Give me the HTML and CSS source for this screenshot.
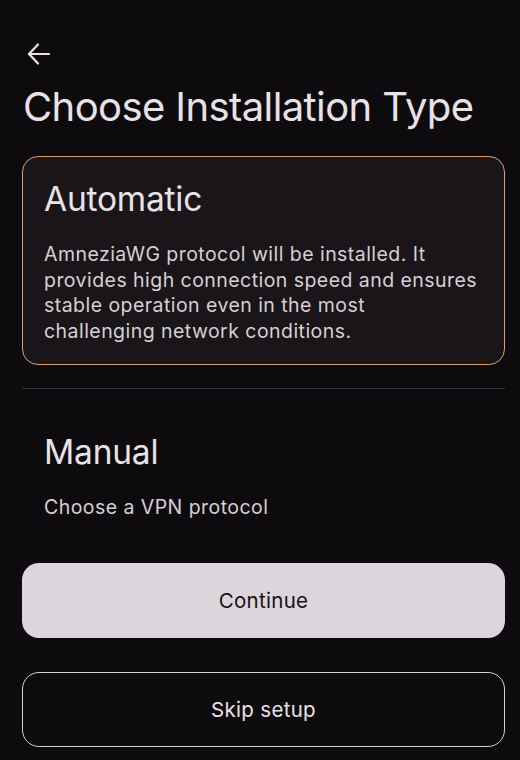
FILE: index.html
```html
<!DOCTYPE html>
<html>
<head>
<meta charset="utf-8">
<link rel="stylesheet" href="styles.css">
</head>
<body>
<div class="screen">
  <div class="topbar">
    <svg class="back" width="26" height="26" viewBox="0 0 26 26" fill="none" stroke="#e8e2e7" stroke-width="2.2" stroke-linecap="round" stroke-linejoin="round"><path d="M23 13H3"/><path d="M12 3.5L3 13l9 9.5"/></svg>
  </div>
  <h1 class="title">Choose Installation Type</h1>
  <div class="option selected">
    <div class="opt-title">Automatic</div>
    <div class="opt-desc">AmneziaWG protocol will be installed. It provides high connection speed and ensures stable operation even in the most challenging network conditions.</div>
  </div>
  <div class="divider"></div>
  <div class="option">
    <div class="opt-title">Manual</div>
    <div class="opt-desc">Choose a VPN protocol</div>
  </div>
  <div class="buttons">
    <button class="btn primary">Continue</button>
    <button class="btn outline">Skip setup</button>
  </div>
</div>
</body>
</html>
```
FILE: styles.css
```css
html, body {
  margin: 0;
  padding: 0;
  background: #0e0b0f;
}
body {
  font-family: Inter, "Noto Sans", sans-serif;
  color: #e6e0e5;
}
.screen {
  padding: 0 15px 0 22px;
  display: flex;
  flex-direction: column;
}
.topbar {
  height: 108px;
  display: flex;
  align-items: flex-start;
  padding-top: 41px;
  box-sizing: border-box;
}
.back {
  margin-left: 4px;
}
.title {
  margin: -27px 0 0 1px;
  font-weight: 400;
  font-size: 40px;
  letter-spacing: -0.6px;
  line-height: 52px;
  color: #e8e2e7;
}
.option {
  border-radius: 16px;
  padding: 20px 25px 20px 21px;
  border: 1px solid transparent;
}
.option.selected {
  margin-top: 23px;
  border: 1.5px solid #d9a070;
  background: #1a1518;
}
.opt-title {
  font-size: 33.5px;
  line-height: 44px;
  letter-spacing: -0.2px;
  color: #e8e2e7;
}
.opt-desc {
  margin-top: 21px;
  font-size: 19.5px;
  line-height: 25.6px;
  color: #d6d0d5;
  letter-spacing: 0.45px;
}
.divider {
  height: 1px;
  background: #36303a;
  margin: 23px 0 20px;
}
.buttons {
  margin-top: 21px;
  display: flex;
  flex-direction: column;
  gap: 34px;
}
.btn {
  height: 75px;
  border-radius: 17px;
  font-family: Inter, "Noto Sans", sans-serif;
  font-size: 20.5px;
  font-weight: 400;
  letter-spacing: 0.3px;
  cursor: pointer;
}
.btn.primary {
  background: #dcd5db;
  color: #161215;
  border: none;
}
.btn.outline {
  background: transparent;
  color: #e8e2e7;
  border: 1.5px solid #d6d0d5;
}
```
